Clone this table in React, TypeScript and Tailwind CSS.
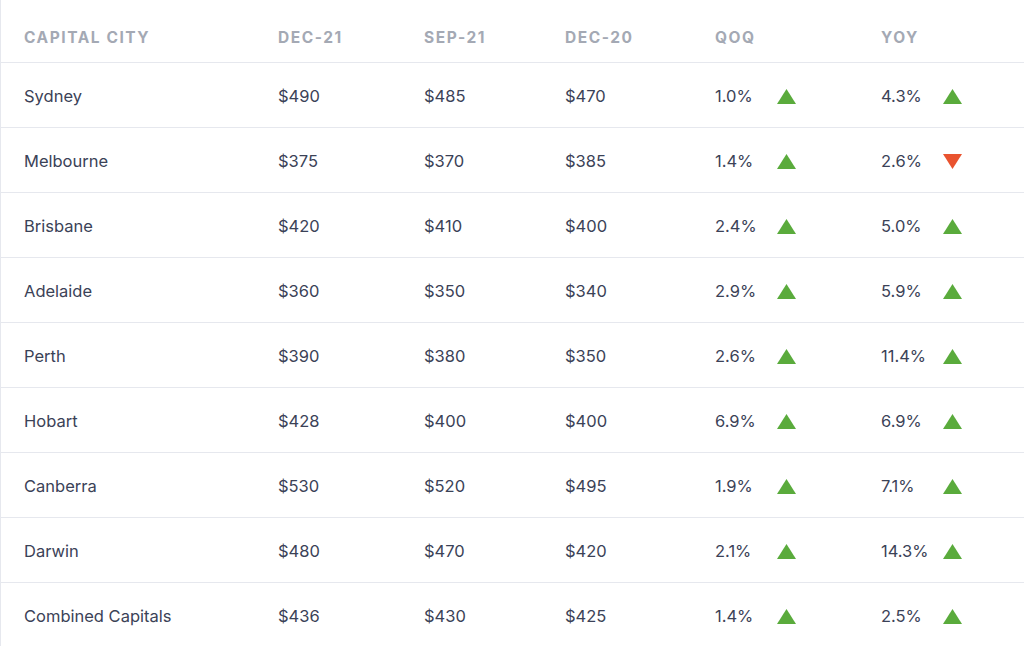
import { ReactNode } from "react";

type Row = {
  city: string;
  dec21: string;
  sep21: string;
  dec20: string;
  qoq: string;
  qoqUp: boolean;
  yoy: string;
  yoyUp: boolean;
};

const rows: Row[] = [
  { city: "Sydney", dec21: "$490", sep21: "$485", dec20: "$470", qoq: "1.0%", qoqUp: true, yoy: "4.3%", yoyUp: true },
  { city: "Melbourne", dec21: "$375", sep21: "$370", dec20: "$385", qoq: "1.4%", qoqUp: true, yoy: "2.6%", yoyUp: false },
  { city: "Brisbane", dec21: "$420", sep21: "$410", dec20: "$400", qoq: "2.4%", qoqUp: true, yoy: "5.0%", yoyUp: true },
  { city: "Adelaide", dec21: "$360", sep21: "$350", dec20: "$340", qoq: "2.9%", qoqUp: true, yoy: "5.9%", yoyUp: true },
  { city: "Perth", dec21: "$390", sep21: "$380", dec20: "$350", qoq: "2.6%", qoqUp: true, yoy: "11.4%", yoyUp: true },
  { city: "Hobart", dec21: "$428", sep21: "$400", dec20: "$400", qoq: "6.9%", qoqUp: true, yoy: "6.9%", yoyUp: true },
  { city: "Canberra", dec21: "$530", sep21: "$520", dec20: "$495", qoq: "1.9%", qoqUp: true, yoy: "7.1%", yoyUp: true },
  { city: "Darwin", dec21: "$480", sep21: "$470", dec20: "$420", qoq: "2.1%", qoqUp: true, yoy: "14.3%", yoyUp: true },
  { city: "Combined Capitals", dec21: "$436", sep21: "$430", dec20: "$425", qoq: "1.4%", qoqUp: true, yoy: "2.5%", yoyUp: true },
];

const cols = "grid grid-cols-[254px_146px_141px_150px_166px_1fr]";

function Arrow({ up }: { up: boolean }) {
  return up ? (
    <svg width="19" height="15" viewBox="0 0 19 15">
      <polygon points="9.5,0 19,15 0,15" fill="#5aab3c" />
    </svg>
  ) : (
    <svg width="19" height="15" viewBox="0 0 19 15">
      <polygon points="0,0 19,0 9.5,15" fill="#e9532f" />
    </svg>
  );
}

function Change({ value, up }: { value: string; up: boolean }) {
  return (
    <div className="flex items-center">
      <span className="w-[62px]">{value}</span>
      <Arrow up={up} />
    </div>
  );
}

function Cell({ children }: { children: ReactNode }) {
  return <div className="pl-[23px]">{children}</div>;
}

export default function App() {
  return (
    <div
      className="min-h-screen bg-white border-l border-[#e6e8ee] text-[#3b4257]"
      style={{ fontFamily: "Inter, 'Noto Sans', sans-serif" }}
    >
      {/* Header */}
      <div
        className={`${cols} h-[63px] items-end pb-[13px] border-b border-[#e6e8ee] text-[15.5px] font-bold tracking-[0.1em] text-[#a4a9b4]`}
      >
        <Cell>CAPITAL CITY</Cell>
        <Cell>DEC-21</Cell>
        <Cell>SEP-21</Cell>
        <Cell>DEC-20</Cell>
        <Cell>QOQ</Cell>
        <Cell>YOY</Cell>
      </div>

      {/* Rows */}
      {rows.map((r) => (
        <div
          key={r.city}
          className={`${cols} h-[65px] pt-[2px] items-center border-b border-[#e6e8ee] text-[16.5px]`}
        >
          <Cell>{r.city}</Cell>
          <Cell>{r.dec21}</Cell>
          <Cell>{r.sep21}</Cell>
          <Cell>{r.dec20}</Cell>
          <Cell>
            <Change value={r.qoq} up={r.qoqUp} />
          </Cell>
          <Cell>
            <Change value={r.yoy} up={r.yoyUp} />
          </Cell>
        </div>
      ))}
    </div>
  );
}
